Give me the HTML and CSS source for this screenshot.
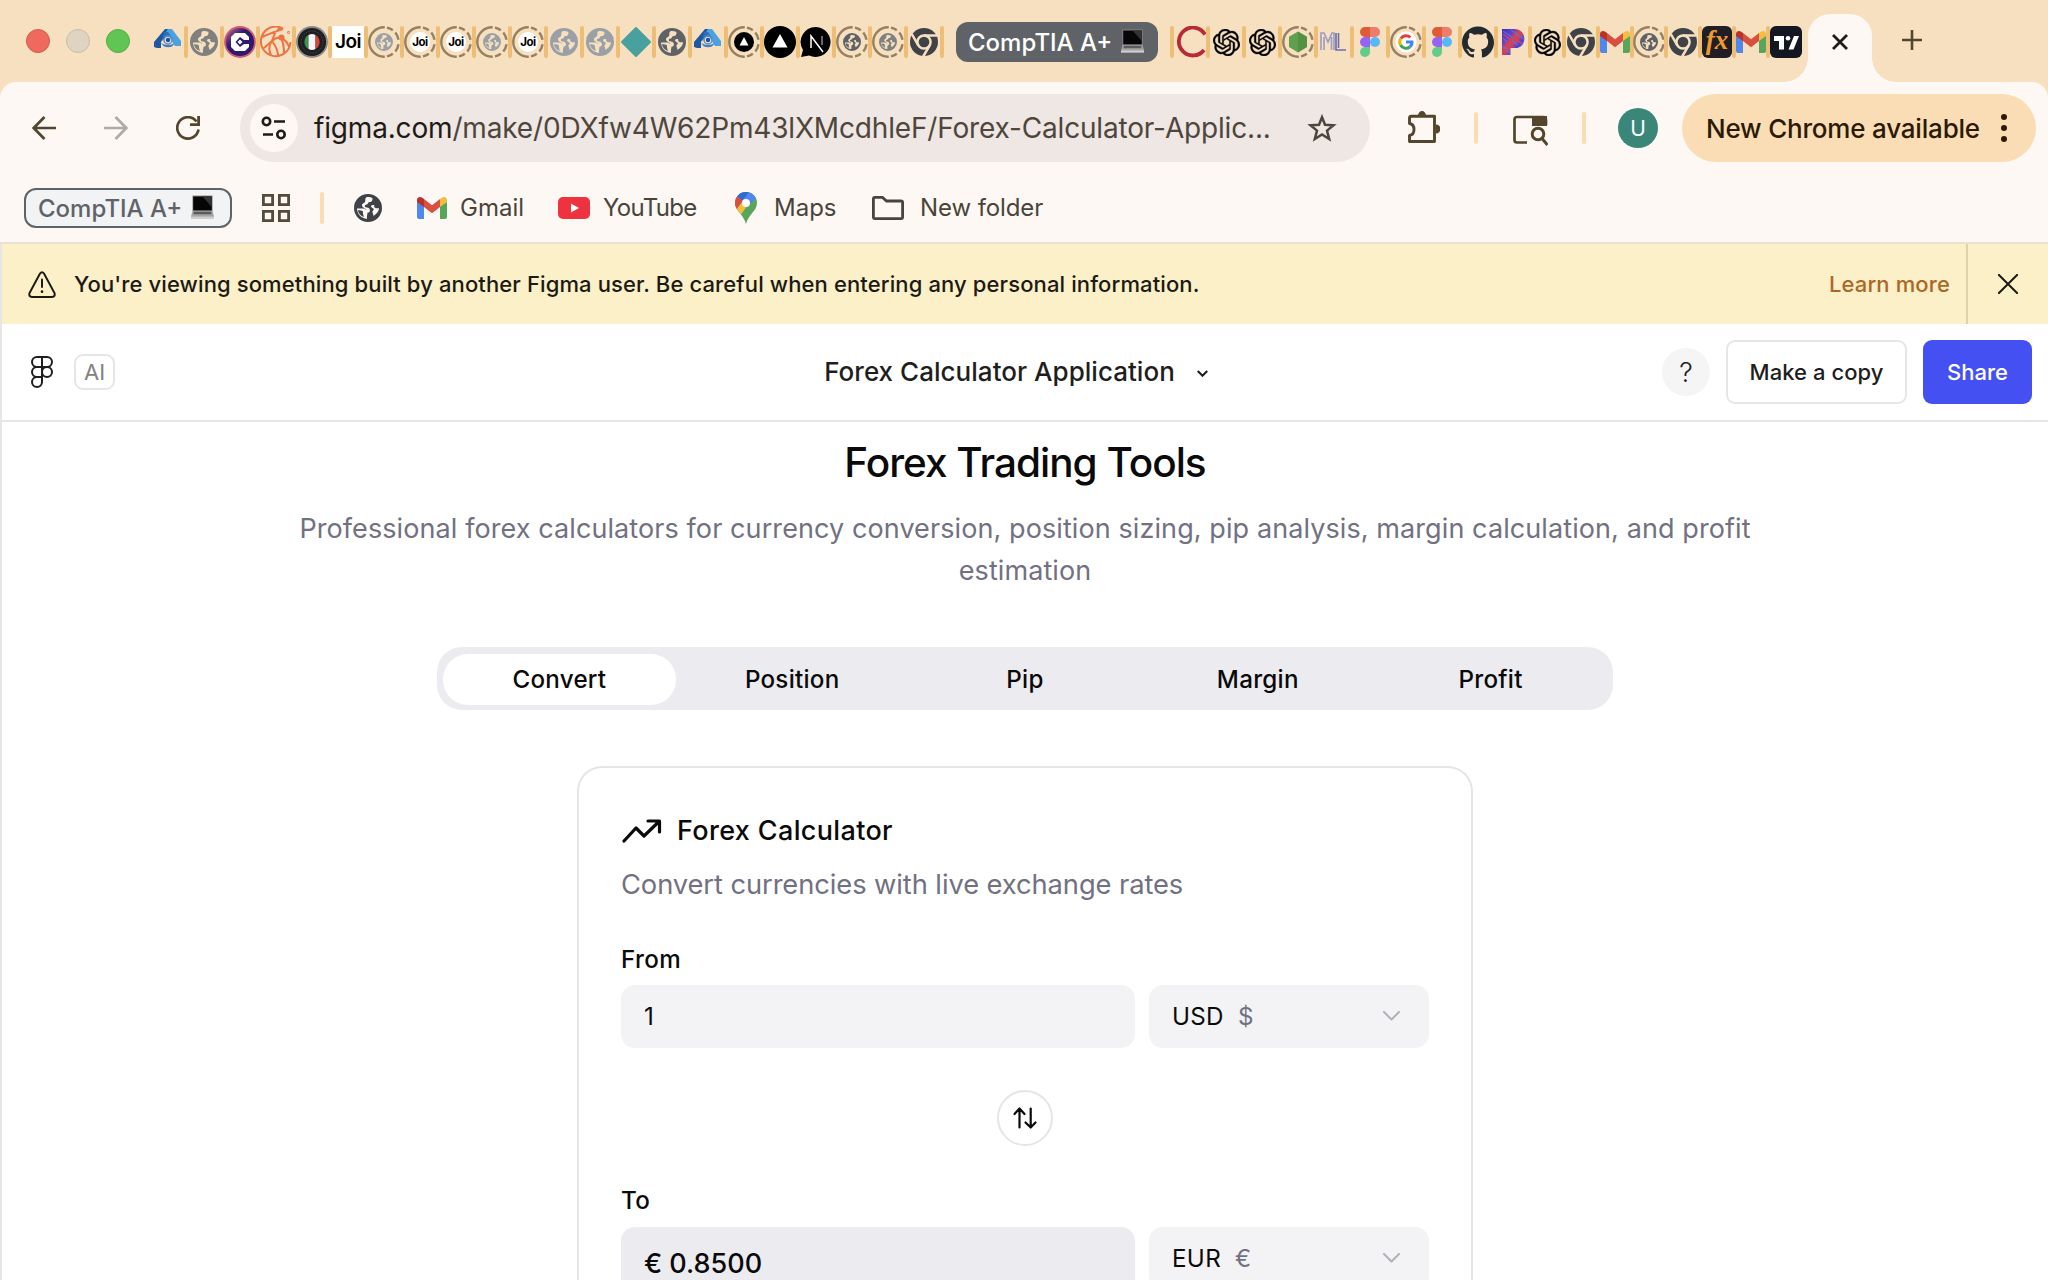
FILE: index.html
```html
<!DOCTYPE html>
<html lang="en">
<head>
<meta charset="utf-8">
<title>Forex Calculator Application</title>
<link rel="stylesheet" href="styles.css">
</head>
<body>
<svg class="sprite" aria-hidden="true">
  <symbol id="ring" viewBox="0 0 32 32"><circle cx="16" cy="16" r="14.700" pathLength="360" fill="none" stroke="#958061" stroke-width="2.400" stroke-dasharray="0 9 31 13 25 9 186 9 25 13 31 9"/></symbol>
  <symbol id="globe" viewBox="0 0 28 28"><path fill="currentColor" fill-rule="evenodd" d="M14 0a14 14 0 1 0 0 28a14 14 0 0 0 0-28zM12.300 3.300C14.500 2.900 16.700 3.200 18.400 4C18.800 7 17.600 8.300 14.500 8.300C14 10.300 12.600 10.800 11 11C10.400 12.400 11 13.200 12.800 13.500C15 13.800 15.900 14.700 15.900 16.300C15.900 18 15.300 18.600 13.600 18.600C13.200 20.500 12.800 22.500 12.900 25C7.500 24.400 3.200 20.500 3 14.600H9.500C11.500 14.700 11.300 16.200 12.500 16.200C12 14 8.200 14 8 11.200C8 9.300 10.700 9.300 11.200 7.500C11.600 5.800 10.800 4.700 12.300 3.300zM3.800 16.300C4.500 19.500 6.800 22 9.800 23C9.500 20.500 8.500 19.500 9 17.500C8 16.500 6 16.300 3.800 16.300zM20.300 11.500C19.800 13.500 20.800 14.600 25 14.300C25 17.500 22.500 20 19.500 22C19.500 19.800 18.500 19.300 18.400 17.700C18.500 16.500 20 16.300 19.800 15C18.900 13.800 17 13.500 16.900 11.900C17.700 11 19.300 10.800 20.300 11.500z"/></symbol>
  <symbol id="chrome" viewBox="0 0 28 28"><circle cx="14" cy="14" r="14" fill="#3f4347"/><circle cx="14" cy="14" r="6.600" fill="none" stroke="#f6e0c0" stroke-width="2.500"/><path d="M14 7.400H27M8.300 17.300L1.800 6M19.700 17.300L13.200 28.500" stroke="#f6e0c0" stroke-width="2.500"/></symbol>
  <symbol id="gmail" viewBox="0 0 30 22"><path fill="#4f87ee" d="M0 4L7 9V22H2a2 2 0 0 1-2-2z"/><path fill="#58a55c" d="M23 9L30 4V20a2 2 0 0 1-2 2H23z"/><path fill="#d94f3f" d="M7 2L15 8.300L23 2V10L15 16.200L7 10z"/><path fill="#b8322a" d="M0 3C0 .3 3-.8 5.200.7L7 2V10L0 5z"/><path fill="#f2be42" d="M30 3C30 .3 27-.8 24.800.7L23 2V10L30 5z"/></symbol>
  <symbol id="openai" viewBox="0 0 24 24"><path d="M22.2819 9.8211a5.9847 5.9847 0 0 0-.5157-4.9108 6.0462 6.0462 0 0 0-6.5098-2.9A6.0651 6.0651 0 0 0 4.9807 4.1818a5.9847 5.9847 0 0 0-3.9977 2.9 6.0462 6.0462 0 0 0 .7427 7.0966 5.98 5.98 0 0 0 .511 4.9107 6.051 6.051 0 0 0 6.5146 2.9001A5.9847 5.9847 0 0 0 13.2599 24a6.0557 6.0557 0 0 0 5.7718-4.2058 5.9894 5.9894 0 0 0 3.9977-2.9001 6.0557 6.0557 0 0 0-.7475-7.0729zm-9.022 12.6081a4.4755 4.4755 0 0 1-2.8764-1.0408l.1419-.0804 4.7783-2.7582a.7948.7948 0 0 0 .3927-.6813v-6.7369l2.02 1.1686a.071.071 0 0 1 .038.052v5.5826a4.504 4.504 0 0 1-4.4945 4.4944zm-9.6607-4.1254a4.4708 4.4708 0 0 1-.5346-3.0137l.142.0852 4.783 2.7582a.7712.7712 0 0 0 .7806 0l5.8428-3.3685v2.3324a.0804.0804 0 0 1-.0332.0615L9.74 19.9502a4.4992 4.4992 0 0 1-6.1408-1.6464zM2.3408 7.8956a4.485 4.485 0 0 1 2.3655-1.9728V11.6a.7664.7664 0 0 0 .3879.6765l5.8144 3.3543-2.0201 1.1685a.0757.0757 0 0 1-.071 0l-4.8303-2.7865A4.504 4.504 0 0 1 2.3408 7.872zm16.5963 3.8558L13.1038 8.364 15.1192 7.2a.0757.0757 0 0 1 .071 0l4.8303 2.7913a4.4944 4.4944 0 0 1-.6765 8.1042v-5.6772a.79.79 0 0 0-.407-.667zm2.0107-3.0231l-.142-.0852-4.7735-2.7818a.7759.7759 0 0 0-.7854 0L9.409 9.2297V6.8974a.0662.0662 0 0 1 .0284-.0615l4.8303-2.7866a4.4992 4.4992 0 0 1 6.6802 4.66zM8.3065 12.863l-2.02-1.1638a.0804.0804 0 0 1-.038-.0567V6.0742a4.4992 4.4992 0 0 1 7.3757-3.4537l-.142.0805L8.704 5.459a.7948.7948 0 0 0-.3927.6813zm1.0976-2.3654l2.602-1.4998 2.6069 1.4998v2.9994l-2.5974 1.4997-2.6067-1.4997Z" stroke="#000" stroke-width=".35"/></symbol>
  <symbol id="fig" viewBox="0 0 20 30"><path fill="#e05a33" d="M5 0H10V10H5A5 5 0 0 1 5 0z"/><path fill="#ee7c6a" d="M10 0H15A5 5 0 0 1 15 10H10z"/><path fill="#9763f6" d="M5 10H10V20H5A5 5 0 0 1 5 10z"/><circle cx="15" cy="15" r="5" fill="#57b8f9"/><path fill="#63cc8a" d="M5 20H10V25A5 5 0 1 1 5 20z"/></symbol>
  <symbol id="azure" viewBox="0 0 28 20"><path fill="#1f58a0" d="M11 0H15L7 13V19H3L0 18V13z"/><path fill="#4aa3e0" d="M14 0H18L27 12V17H21L12 3z"/><path fill="#2f6dbd" d="M10 3H14L19 10L16 8H12L8 12z"/><circle cx="14" cy="11" r="4" fill="none" stroke="#5a8fd0" stroke-width="1.500"/><circle cx="14" cy="11" r="2.200" fill="#1c4f9c"/><path fill="#3e7ccc" d="M7 14Q14 18 21 14L18 17.500Q14 19 10 17.500z"/></symbol>
  <symbol id="laptop" viewBox="0 0 24 24"><path fill="#8b8b8b" d="M1.500 0H22.500V17H1.500z"/><path fill="#060606" d="M2.300 1H21.700V15.500H2.300z"/><path fill="#333" d="M12 1H21.700V12z"/><path fill="#a5a5a5" d="M1.500 16.500H22.500L24 22V24H0V22z"/><path fill="#5c5c5c" d="M3 17H21L21.600 19.500H2.400z"/><path fill="#cfcfcf" d="M0 22H24V24H0z"/></symbol>
</svg>

<header class="browser">
  <div class="strip">
    <div class="lights"><i class="red"></i><i class="idle"></i><i class="green"></i></div>
    <div class="tabs">
      <span class="tab"><svg class="az"><use href="#azure"/></svg></span>
      <span class="tab g1"><svg class="full"><use href="#globe"/></svg></span>
      <span class="tab"><svg class="box" viewBox="0 0 32 32"><defs><linearGradient id="cg" x1="0" y1="0" x2=".7" y2=".7"><stop offset="0" stop-color="#d9729b"/><stop offset=".55" stop-color="#31186f"/></linearGradient></defs><circle cx="16" cy="16" r="15" fill="url(#cg)" stroke="#cf5c72" stroke-width="1.800"/><path fill="#fff" d="M11 7H21L25 11V14H20L16 11L11.500 16L16 21L20 18H25V21L21 25H11L7 21V11zM16 13.500L18.500 16L16 18.500L13.500 16z" fill-rule="evenodd"/></svg></span>
      <span class="tab"><svg class="box" viewBox="0 0 32 32" fill="none" stroke="#ee7242" stroke-width="2"><path d="M23 2.500A14.800 14.800 0 1 0 30.500 16M2 11C9 8 16 5 23 3M12 15C14 8 17 4 20 2M12 15C15 12 18 11 21 12C26 14 28 18 29 21M12 15L4 22M12 15C8 20 9 25 11 29M12 15C15 19 18 24 18 30M21 12C23 16 24 21 24 27"/><circle cx="21.500" cy="11.500" r="2" fill="#ee7242"/><circle cx="28.500" cy="6.500" r=".4"/></svg></span>
      <span class="tab"><svg class="box" viewBox="0 0 32 32"><circle cx="16" cy="16" r="15" fill="#1f1e20" stroke="#888a8e" stroke-width="1.800"/><circle cx="16" cy="16" r="11" fill="none" stroke="#4a4a4c" stroke-dasharray="1.500 1.500"/><path fill="#3e9350" d="M12.500 9V23A8 8 0 0 1 12.500 9z"/><path fill="#f5f5f5" d="M12.500 9Q16 7 19.500 9V23Q16 25 12.500 23z"/><path fill="#d8453a" d="M19.500 9V23A8 8 0 0 0 19.500 9z"/></svg></span>
      <span class="tab"><svg class="box" viewBox="0 0 32 32"><path fill="#fff" d="M0 0H32V32H0z"/><text class="joi" x="16" y="22" text-anchor="middle">Joi</text></svg></span>
      <span class="tab g2"><svg class="box"><use href="#ring"/></svg><svg class="mini"><use href="#globe"/></svg></span>
      <span class="tab"><svg class="box" viewBox="0 0 32 32"><use href="#ring"/><circle cx="16" cy="16" r="10" fill="#fff"/><text class="joi-s" x="16" y="20" text-anchor="middle">Joi</text></svg></span>
      <span class="tab"><svg class="box" viewBox="0 0 32 32"><use href="#ring"/><circle cx="16" cy="16" r="10" fill="#fff"/><text class="joi-s" x="16" y="20" text-anchor="middle">Joi</text></svg></span>
      <span class="tab g2"><svg class="box"><use href="#ring"/></svg><svg class="mini"><use href="#globe"/></svg></span>
      <span class="tab"><svg class="box" viewBox="0 0 32 32"><use href="#ring"/><circle cx="16" cy="16" r="10" fill="#fff"/><text class="joi-s" x="16" y="20" text-anchor="middle">Joi</text></svg></span>
      <span class="tab g2"><svg class="full"><use href="#globe"/></svg></span>
      <span class="tab g2"><svg class="full"><use href="#globe"/></svg></span>
      <span class="tab"><svg class="box" viewBox="0 0 32 32"><path fill="#48a19e" stroke="#48a19e" stroke-width="2" stroke-linejoin="round" d="M16 2L30 16L16 30L2 16z"/></svg></span>
      <span class="tab g3"><svg class="full"><use href="#globe"/></svg></span>
      <span class="tab"><svg class="az"><use href="#azure"/></svg></span>
      <span class="tab"><svg class="box" viewBox="0 0 32 32"><use href="#ring"/><circle cx="16" cy="16" r="10"/><path fill="#fff" d="M16 11L20.500 19.500H11.500z"/></svg></span>
      <span class="tab"><svg class="box" viewBox="0 0 32 32"><circle cx="16" cy="16" r="16"/><path fill="#fff" d="M16 8L23.500 21.500H8.500z"/></svg></span>
      <span class="tab"><svg class="box" viewBox="0 0 32 32"><path d="M16 1A15 15 0 1 1 9 29.500L1 31L3 24A15 15 0 0 1 16 1z"/><path fill="none" stroke="#fff" stroke-width="1.500" d="M11 22V10L23 26"/><path stroke="#888" stroke-width="1.500" d="M22 10V19"/></svg></span>
      <span class="tab g3"><svg class="box"><use href="#ring"/></svg><svg class="mini"><use href="#globe"/></svg></span>
      <span class="tab g1"><svg class="box"><use href="#ring"/></svg><svg class="mini"><use href="#globe"/></svg></span>
      <span class="tab"><svg class="full"><use href="#chrome"/></svg></span>
    </div>
    <div class="group">CompTIA A+<svg><use href="#laptop"/></svg></div>
    <div class="tabs lead">
      <span class="tab"><svg class="box" viewBox="0 0 32 32"><path fill="none" stroke="#b92a36" stroke-width="3.800" d="M31 8.500A14 14 0 1 0 30 24"/></svg></span>
      <span class="tab"><svg class="ai"><use href="#openai"/></svg></span>
      <span class="tab"><svg class="ai"><use href="#openai"/></svg></span>
      <span class="tab"><svg class="box" viewBox="0 0 32 32"><use href="#ring"/><path fill="#5fa04e" d="M16 5.500L25 10.700V21L16 26.500L7 21V10.700z"/><path fill="#478338" d="M16 5.500L25 10.700V21L16 26.500z" opacity=".5"/></svg></span>
      <span class="tab"><svg class="box" viewBox="0 0 32 32" fill="none" stroke="#9b9bc6" stroke-width="1.600"><path d="M3 24V7H6L10 16L14 7H16V24M6 24V11M13.500 24V11"/><path stroke="#6c6cad" d="M18 7V24H28M20.500 7V22"/></svg></span>
      <span class="tab"><svg class="fg"><use href="#fig"/></svg></span>
      <span class="tab"><svg class="box" viewBox="0 0 32 32"><use href="#ring"/><circle cx="16" cy="16" r="10.500" fill="#fff"/><g fill="none" stroke-width="3"><path stroke="#db4437" d="M10.800 12.500A6.200 6.200 0 0 1 20.300 11.500"/><path stroke="#f4b400" d="M10.500 19A6.200 6.200 0 0 1 10.800 12.500"/><path stroke="#3aa757" d="M10.500 19A6.200 6.200 0 0 0 19.700 21"/><path stroke="#4285f4" d="M19.700 21A6.200 6.200 0 0 0 22 16H16"/></g></svg></span>
      <span class="tab"><svg class="fg"><use href="#fig"/></svg></span>
      <span class="tab"><svg class="box" viewBox="0 0 24 24"><path fill="#24292e" d="M12 .297c-6.630 0-12 5.373-12 12 0 5.303 3.438 9.800 8.205 11.385.6.113.82-.258.82-.577 0-.285-.01-1.040-.015-2.040-3.338.724-4.042-1.610-4.042-1.610C4.422 18.070 3.633 17.700 3.633 17.700c-1.087-.744.084-.729.084-.729 1.205.084 1.838 1.236 1.838 1.236 1.070 1.835 2.809 1.305 3.495.998.108-.776.417-1.305.76-1.605-2.665-.3-5.466-1.332-5.466-5.930 0-1.310.465-2.380 1.235-3.220-.135-.303-.54-1.523.105-3.176 0 0 1.005-.322 3.300 1.230.96-.267 1.980-.399 3-.405 1.020.006 2.040.138 3 .405 2.280-1.552 3.285-1.230 3.285-1.230.645 1.653.24 2.873.12 3.176.765.84 1.230 1.910 1.230 3.220 0 4.610-2.805 5.625-5.475 5.920.42.36.81 1.096.81 2.220 0 1.606-.015 2.896-.015 3.286 0 .315.21.69.825.57C20.565 22.092 24 17.592 24 12.297c0-6.627-5.373-12-12-12"/></svg></span>
    </div>
    <div class="tabs tight">
      <span class="tab"><svg class="box" viewBox="0 0 32 32"><defs><linearGradient id="pg" x1="0" y1="0" x2="1" y2="1"><stop offset="0" stop-color="#3b2fc0"/><stop offset=".3" stop-color="#6a3fc4"/><stop offset=".42" stop-color="#d4434c"/><stop offset=".55" stop-color="#c8416a"/><stop offset=".68" stop-color="#4540d8"/><stop offset="1" stop-color="#6fa0ee"/></linearGradient></defs><path fill="url(#pg)" d="M5 3H17C31 3 30 22 18.500 22H13.500V29H5z"/><path stroke="#5a7ae8" stroke-width="1.300" opacity=".7" d="M6 5L16 12M14 4L27 13M6 20L13 27M15 14L21 19M6 12L10 16"/><path stroke="#e0485a" stroke-width="1.500" opacity=".8" d="M6 8L14 14M20 15L26 18"/></svg></span>
      <span class="tab"><svg class="ai"><use href="#openai"/></svg></span>
      <span class="tab"><svg class="full"><use href="#chrome"/></svg></span>
      <span class="tab"><svg class="gm"><use href="#gmail"/></svg></span>
      <span class="tab g3"><svg class="box"><use href="#ring"/></svg><svg class="mini"><use href="#globe"/></svg></span>
      <span class="tab"><svg class="full"><use href="#chrome"/></svg></span>
      <span class="tab"><svg class="box" viewBox="0 0 32 32"><rect x="1" width="30" height="32" rx="6" fill="#1e1e24"/><text class="fx" x="16" y="23" text-anchor="middle">fx</text></svg></span>
      <span class="tab"><svg class="gm"><use href="#gmail"/></svg></span>
      <span class="tab last"><svg class="box" viewBox="0 0 32 32"><rect width="32" height="32" rx="6" fill="#131722"/><path fill="#fff" d="M4 10H14V23.500H9V15H4zM24 10H29L23.500 23.500H18.500z"/><circle cx="18" cy="12.300" r="2.300" fill="#fff"/></svg></span>
    </div>
    <div class="active"><svg viewBox="0 0 16 16"><path d="M1 1L15 15M15 1L1 15" stroke="#1f1b16" stroke-width="2.800"/></svg></div>
    <svg class="plus" viewBox="0 0 20 20"><path d="M10 0V20M0 10H20" stroke="#54452d" stroke-width="2.600"/></svg>
  </div>

  <div class="panel">
    <div class="nav">
      <svg class="n1" viewBox="0 0 24 24"><path d="M12.500 1L1.700 12L12.500 23M2 12H24" fill="none" stroke="#54452d" stroke-width="2.700"/></svg>
      <svg class="n2" viewBox="0 0 24 24"><path d="M11.500 1L22.300 12L11.500 23M22 12H0" fill="none" stroke="#b0aaa4" stroke-width="2.700"/></svg>
      <svg class="n3" viewBox="0 0 24 24"><path d="M22.500 13.500A10.700 10.700 0 1 1 20.500 5.500" fill="none" stroke="#54452d" stroke-width="2.700"/><path d="M24 0V10H14V7.300H21.200V0z" fill="#54452d"/></svg>
      <div class="url">
        <span class="site"><svg viewBox="0 0 26 24" fill="none" stroke="#1f1b16" stroke-width="2.600"><circle cx="5.500" cy="5.500" r="3.700"/><path d="M13 5.500H24M2 18.500H12"/><circle cx="20" cy="18.500" r="3.700"/></svg></span>
        <span class="addr"><b>figma.com</b>/make/0DXfw4W62Pm43lXMcdhleF/Forex-Calculator-Applic...</span>
        <svg class="star" viewBox="0 0 30 29"><path d="M15 3.200L18 10.700L26.500 11.300L20 16.600L22.200 25L15 20.400L7.800 25L10 16.600L3.500 11.300L12 10.700z" fill="none" stroke="#4e463c" stroke-width="2.500"/></svg>
      </div>
      <svg class="puzzle" viewBox="0 0 32 32"><path d="M3.500 5.300H26.500V30.500H1.500V24.500C7.500 23.500 7.500 13.500 1.500 12.500V7.300Q1.500 5.300 3.500 5.300z" fill="none" stroke="#54452d" stroke-width="2.900" stroke-linejoin="round"/><path d="M10 5A4 5 0 0 1 18 5zM28 13.500A4.500 4.500 0 0 1 28 22.500z" fill="#54452d"/></svg>
      <i class="sep s1"></i>
      <svg class="lens" viewBox="0 0 35 31"><path d="M14 27.500H4Q1.500 27.500 1.500 25V4.500Q1.500 2 4 2H30Q33 2 33 5V10" fill="none" stroke="#54452d" stroke-width="2.700"/><path d="M19 1H34V11H19z" fill="#54452d"/><circle cx="25" cy="19" r="5.800" fill="none" stroke="#54452d" stroke-width="3"/><path d="M29 23.500L34.500 30" stroke="#54452d" stroke-width="3"/></svg>
      <i class="sep s2"></i>
      <span class="avatar">U</span>
      <div class="update"><span>New Chrome available</span><svg viewBox="0 0 6 28" fill="#2b1a06"><circle cx="3" cy="3" r="3"/><circle cx="3" cy="14" r="3"/><circle cx="3" cy="25" r="3"/></svg></div>
    </div>
    <div class="marks">
      <div class="chip">CompTIA A+<svg><use href="#laptop"/></svg></div>
      <svg class="apps" viewBox="0 0 28 28" fill="none" stroke="#544b3a" stroke-width="2.800"><path d="M1.400 1.400H10.600V10.600H1.400zM17.400 1.400H26.600V10.600H17.400zM1.400 17.400H10.600V26.600H1.400zM17.400 17.400H26.600V26.600H17.400z"/></svg>
      <i class="sep s3"></i>
      <svg class="world"><use href="#globe"/></svg>
      <svg class="bgm"><use href="#gmail"/></svg><span class="gmail-t">Gmail</span>
      <svg class="yt" viewBox="0 0 32 22"><rect width="32" height="22" rx="5" fill="#ee323e"/><path d="M13 6.500L21 11L13 15.500z" fill="#fff"/></svg><span class="yt-t">YouTube</span>
      <svg class="pin" viewBox="0 0 22 32"><defs><clipPath id="pc"><path d="M11 0A11 11 0 0 1 22 11C22 19 13.500 22 11 32C8.500 22 0 19 0 11A11 11 0 0 1 11 0z"/></clipPath></defs><g clip-path="url(#pc)"><path fill="#58a55c" d="M0 0H22V32H0z"/><path fill="#4f87ee" d="M0 0H22V6L11 15L4 8z"/><path fill="#2c6bd4" d="M0 3L5 0H14L7 9z"/><path fill="#d94f3f" d="M0 2L8 9L2 18L-2 14z"/><path fill="#f2be42" d="M0 19L8 9L12 14L5 24z"/></g><circle cx="11" cy="11" r="4" fill="#fff"/></svg><span class="maps-t">Maps</span>
      <svg class="folder" viewBox="0 0 32 24"><path d="M3 1.400H10.500L14.500 5H29Q30.600 5 30.600 6.600V21Q30.600 22.600 29 22.600H3Q1.400 22.600 1.400 21V3Q1.400 1.400 3 1.400z" fill="none" stroke="#49443a" stroke-width="2.800"/></svg><span class="folder-t">New folder</span>
    </div>
  </div>
</header>

<main class="figma">
  <div class="banner">
    <svg class="warn" viewBox="0 0 28 27" fill="none" stroke="#1b1a15" stroke-width="2" stroke-linecap="round"><path d="M12 2.500Q14 0 16 2.500L26.500 22Q27.500 25.800 24 26H4Q.5 25.800 1.500 22z"/><path d="M14 8.500V16"/><path d="M14 20.500V20.700" stroke-width="2.600"/></svg>
    <span class="note">You're viewing something built by another Figma user. Be careful when entering any personal information.</span>
    <a class="learn">Learn more</a>
    <span class="close"><svg viewBox="0 0 20 20"><path d="M0 0L20 20M20 0L0 20" stroke="#1b1a15" stroke-width="2"/></svg></span>
  </div>
  <div class="bar">
    <div class="left">
      <svg class="logo" viewBox="0 0 22 32" fill="none" stroke="#1e1e1e" stroke-width="2"><path d="M11 1H6A5 5 0 0 0 6 11H11zM11 1H16A5 5 0 0 1 16 11H11zM11 11H6A5 5 0 0 0 6 21H11zM11 21V26A5 5 0 1 1 6 21H11z"/><circle cx="16" cy="16" r="5"/></svg>
      <span class="ai-tag">AI</span>
    </div>
    <div class="title">Forex Calculator Application<svg viewBox="0 0 10 6"><path d="M.7.7L5 5L9.300.7" fill="none" stroke="#1e1e1e" stroke-width="1.900"/></svg></div>
    <div class="right"><span class="help">?</span><span class="copy">Make a copy</span><span class="share">Share</span></div>
  </div>
  <section class="page">
    <h1>Forex Trading Tools</h1>
    <p class="lead-text">Professional forex calculators for currency conversion, position sizing, pip analysis, margin calculation, and profit<br>estimation</p>
    <nav class="switch"><span class="on">Convert</span><span>Position</span><span>Pip</span><span>Margin</span><span>Profit</span></nav>
    <div class="card">
      <h2><svg viewBox="0 0 40 24" fill="none" stroke="#0a0a0a" stroke-width="3.200" stroke-linecap="round" stroke-linejoin="round"><path d="M2 22L14 9L22 17L37 2.500M26 2H37.500V13"/></svg>Forex Calculator</h2>
      <p class="desc">Convert currencies with live exchange rates</p>
      <label class="from">From</label>
      <div class="fields first"><div class="field">1</div><div class="select">USD<em>$</em><svg viewBox="0 0 17 10"><path d="M1 1L8.500 8.500L16 1" fill="none" stroke="#b0b0ba" stroke-width="2" stroke-linecap="round" stroke-linejoin="round"/></svg></div></div>
      <div class="swap"><svg viewBox="0 0 24 22" fill="none" stroke="#0a0a0a" stroke-width="2.200" stroke-linecap="round" stroke-linejoin="round"><path d="M1.500 7L6.500 1.500L11.500 7M6.500 2V20.500M12.500 15.500L17.700 20.500L22.500 15.500M17.700 1.500V20"/></svg></div>
      <label class="to">To</label>
      <div class="fields"><div class="result">€ 0.8500</div><div class="select">EUR<em>€</em><svg viewBox="0 0 17 10"><path d="M1 1L8.500 8.500L16 1" fill="none" stroke="#b0b0ba" stroke-width="2" stroke-linecap="round" stroke-linejoin="round"/></svg></div></div>
    </div>
  </section>
</main>
</body>
</html>
```
FILE: styles.css
```css
* { box-sizing: border-box; }
html, body { margin: 0; height: 1280px; overflow: hidden; }
body { width: 2048px; font-family: Inter, "Liberation Sans", sans-serif; background: #fff; color: #0a0a0a; white-space: nowrap; }
svg { display: block; flex: none; }
.sprite { position: absolute; width: 0; height: 0; }

/* browser chrome */
.browser { background: #f6e0c0; height: 244px; }
.strip { display: flex; align-items: center; height: 82px; }
.lights { display: flex; gap: 16px; padding-left: 26px; width: 150px; }
.lights i { width: 24px; height: 24px; border-radius: 50%; border: 1px solid; }
.lights .red { background: #ee6a5f; border-color: #d9574d; }
.lights .idle { background: #dfd4c1; border-color: #c8bda9; }
.lights .green { background: #61c554; border-color: #51ae43; }
.tabs { display: flex; margin-top: 2px; }
.tab { position: relative; display: grid; place-items: center; align-content: center; justify-content: center; flex: none; width: 36px; height: 32px; }
.tab > svg { grid-area: 1 / 1; }
.tab::after, .lead .tab:first-child::before { content: ""; position: absolute; top: 0; right: -2px; width: 4px; height: 32px; border-radius: 2px; background: #efbe76; }
.lead .tab:first-child::before { right: auto; left: -2px; }
.tabs.lead { margin-left: 14px; }
.tight .tab { width: 34px; }
.tight .last { width: 36px; }
.tight .last::after { display: none; }
.box { width: 32px; height: 32px; }
.full { width: 28px; height: 28px; }
.mini { width: 18px; height: 18px; }
.az { width: 28px; height: 20px; margin-top: -6px; }
.ai { width: 27px; height: 27px; }
.fg { width: 20px; height: 30px; }
.gm { width: 30px; height: 22px; }
.g1 { color: #80817f; }
.g2 { color: #9aa0a6; }
.g3 { color: #5f6368; }
.joi { font: 600 19px Inter, sans-serif; letter-spacing: -.5px; }
.joi-s { font: 700 11.500px Inter, sans-serif; letter-spacing: -.5px; }
.fx { font: italic 700 27px "Liberation Serif", serif; fill: #ef9a2d; }
.group, .chip { display: flex; align-items: center; gap: 9px; font-weight: 500; font-size: 24px; height: 40px; border-radius: 12px; }
.group svg, .chip svg { width: 23px; height: 24px; margin-top: -2px; }
.group { width: 202px; margin-left: 14px; padding-left: 12px; background: #5f6368; color: #fff; margin-top: 2px; }
.active { position: relative; display: grid; place-items: center; width: 64px; height: 68px; margin-left: 4px; align-self: flex-end; background: #fdf8f4; border-radius: 22px 22px 0 0; padding-bottom: 12px; }
.active::before, .active::after { content: ""; position: absolute; bottom: 0; width: 24px; height: 24px; }
.active::before { right: 100%; background: radial-gradient(circle at 0 0, transparent 23.500px, #fdf8f4 24px); }
.active::after { left: 100%; background: radial-gradient(circle at 100% 0, transparent 23.500px, #fdf8f4 24px); }
.active svg { width: 16px; height: 16px; }
.plus { width: 20px; height: 20px; margin-left: 30px; margin-top: -2px; }

.panel { height: 162px; background: #fdf8f4; border-radius: 16px 16px 0 0; border-bottom: 2px solid #ece0d5; padding-top: 12px; }
.nav { display: flex; align-items: center; height: 68px; padding-left: 32px; }
.n1, .n2, .n3 { width: 24px; height: 24px; }
.n2, .n3 { margin-left: 48px; }
.url { display: flex; align-items: center; width: 1130px; height: 68px; margin-left: 40px; padding-left: 10px; border-radius: 34px; background: #efe7e3; }
.site { display: grid; place-items: center; width: 48px; height: 48px; border-radius: 50%; background: #fdf8f4; }
.site svg { width: 26px; height: 24px; }
.addr { width: 1009px; padding-left: 16px; font-size: 28px; letter-spacing: -.17px; color: #4e463c; }
.addr b { font-weight: 400; color: #1f1b16; }
.star { width: 30px; height: 29px; }
.puzzle { width: 32px; height: 32px; margin-left: 38px; margin-top: -2px; }
.sep { width: 4px; height: 32px; border-radius: 2px; background: #faddb3; flex: none; }
.s1 { margin-left: 34px; }
.lens { width: 35px; height: 31px; margin-left: 35px; margin-top: 4px; }
.s2 { margin-left: 34px; }
.avatar { display: grid; place-items: center; width: 40px; height: 40px; margin-left: 32px; border-radius: 50%; background: #3a877a; color: #fff; font-size: 21px; }
.update { display: flex; align-items: center; justify-content: space-between; width: 354px; height: 68px; margin-left: 24px; padding: 0 29px 0 24px; border-radius: 34px; background: #faddb5; color: #2b1a06; font-weight: 450; font-size: 26px; letter-spacing: -.2px; }
.update svg { width: 6px; height: 28px; }
.marks { display: flex; align-items: center; height: 92px; padding-left: 24px; font-size: 24px; color: #49443a; }
.marks span { flex: none; margin-top: -1px; }
.chip { width: 208px; padding-left: 12px; border: 2px solid #5f6368; background: #f1f3f4; color: #5f6368; }
.apps { width: 28px; height: 28px; margin-left: 30px; }
.s3 { margin-left: 30px; }
.world { width: 28px; height: 28px; margin-left: 30px; color: #3f4347; }
.bgm { width: 30px; height: 22px; margin-left: 35px; }
.gmail-t { width: 98px; margin-left: 13px; }
.yt { width: 32px; height: 22px; }
.yt-t { width: 132px; margin-left: 13px; letter-spacing: -.7px; }
.pin { width: 22px; height: 32px; }
.maps-t { width: 98px; margin-left: 17px; }
.folder { width: 32px; height: 24px; }
.folder-t { margin-left: 16px; letter-spacing: -.1px; }

/* figma shell */
.figma { display: flex; flex-direction: column; border-left: 2px solid #e6e6e6; height: 1036px; }
.banner { display: flex; flex: none; align-items: center; height: 80px; padding-left: 26px; background: #fcf0c8; font-weight: 500; font-size: 22px; letter-spacing: .12px; color: #1b1a15; }
.warn { width: 28px; height: 27px; }
.note { flex: 1; padding-left: 18px; }
.learn { color: #ad6725; margin-right: 16px; }
.close { display: grid; place-items: center; width: 82px; height: 80px; border-left: 2px solid #e0d3a8; }
.close svg { width: 20px; height: 20px; }
.bar { display: grid; flex: none; grid-template-columns: 1fr auto 1fr; align-items: center; height: 98px; border-bottom: 2px solid #e6e6e6; }
.left { display: flex; align-items: center; padding-left: 29px; }
.logo { width: 22px; height: 32px; }
.ai-tag { display: grid; place-items: center; width: 41px; height: 36px; margin-left: 21px; border: 2px solid #e6e6e6; border-radius: 9px; font-size: 22px; color: #828282; }
.title { display: flex; align-items: center; gap: 22px; margin: -1px 18px 0 0; font-weight: 500; font-size: 26px; letter-spacing: .03px; color: #1e1e1e; }
.title svg { width: 11px; height: 7px; margin-top: 3px; }
.right { display: flex; align-items: center; justify-content: flex-end; gap: 16px; padding-right: 16px; font-size: 22px; font-weight: 450; letter-spacing: .05px; color: #1e1e1e; }
.help, .copy, .share { display: grid; place-items: center; height: 64px; border-radius: 9px; }
.help { width: 48px; height: 48px; border-radius: 50%; background: #f5f5f5; font-size: 27px; font-weight: 300; }
.copy { width: 181px; border: 2px solid #e6e6e6; }
.share { width: 109px; background: #4550f3; color: #fff; }

/* calculator page */
.page { display: flex; flex: 1; min-height: 0; overflow: hidden; flex-direction: column; align-items: center; padding-top: 16px; }
h1 { flex: none; margin: 0; font-size: 40.500px; font-weight: 530; line-height: 50px; letter-spacing: -1px; }
.lead-text { flex: none; margin: 20px 0 0; font-size: 27px; line-height: 41.600px; letter-spacing: .09px; text-align: center; color: #717182; }
.switch { display: flex; flex: none; width: 1176px; height: 63px; margin-top: 55.800px; padding: 7px 6px 5px; border-radius: 25px; background: #ececf0; font-size: 24.200px; font-weight: 500; letter-spacing: .25px; }
.switch span { flex: 1; display: grid; place-items: center; padding-top: 1px; border-radius: 25px; }
.switch .on { background: #fff; }
.card { flex: 1; min-height: 0; overflow: hidden; width: 896px; margin-top: 56px; padding: 43px 42px 0; border: 2px solid #e5e5e5; border-bottom: 0; border-radius: 25px 25px 0 0; }
h2 { display: flex; align-items: center; gap: 15px; height: 40px; margin: 0; padding-left: 1px; font-size: 27px; font-weight: 500; letter-spacing: .35px; }
h2 svg { width: 40px; height: 24px; }
.desc { margin: 14px 0 0; font-size: 27.300px; line-height: 40px; letter-spacing: -.08px; color: #717182; }
label { display: block; font-size: 24.200px; font-weight: 500; line-height: 24px; letter-spacing: .4px; }
.from { margin-top: 43px; }
.fields { display: flex; align-items: flex-start; justify-content: space-between; margin-top: 14px; }
.fields.first { margin-top: 13px; }
.field, .select, .result { display: flex; align-items: center; height: 63px; border-radius: 14px; background: #f3f3f5; padding-left: 23px; font-size: 24.200px; letter-spacing: .3px; }
.field { width: 514px; }
.result { width: 514px; height: 73px; background: #ececf0; font-size: 27px; font-weight: 500; letter-spacing: 0; }
.select { width: 280px; padding-right: 29px; }
.select em { flex: 1; margin-left: 14px; font-style: normal; color: #717182; }
.select svg { width: 17px; height: 10px; }
.swap { display: grid; place-items: center; width: 56px; height: 56px; margin: 42px auto 0; border: 2px solid #e5e5e5; border-radius: 50%; }
.swap svg { width: 24px; height: 22px; }
.to { margin-top: 43px; }
```
